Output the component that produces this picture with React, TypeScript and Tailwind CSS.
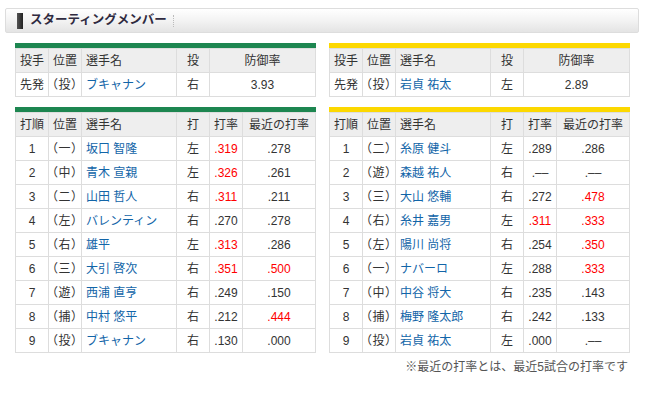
import React from "react";

type Bat = { o: string; p: string; n: string; h: string; a: string; ar?: boolean; r: string; rr?: boolean };

const giants: Bat[] = [
  { o: "1", p: "（一）", n: "坂口 智隆", h: "左", a: ".319", ar: true, r: ".278" },
  { o: "2", p: "（中）", n: "青木 宣親", h: "左", a: ".326", ar: true, r: ".261" },
  { o: "3", p: "（二）", n: "山田 哲人", h: "右", a: ".311", ar: true, r: ".211" },
  { o: "4", p: "（左）", n: "バレンティン", h: "右", a: ".270", r: ".278" },
  { o: "5", p: "（右）", n: "雄平", h: "左", a: ".313", ar: true, r: ".286" },
  { o: "6", p: "（三）", n: "大引 啓次", h: "右", a: ".351", ar: true, r: ".500", rr: true },
  { o: "7", p: "（遊）", n: "西浦 直亨", h: "右", a: ".249", r: ".150" },
  { o: "8", p: "（捕）", n: "中村 悠平", h: "右", a: ".212", r: ".444", rr: true },
  { o: "9", p: "（投）", n: "ブキャナン", h: "右", a: ".130", r: ".000" },
];

const tigers: Bat[] = [
  { o: "1", p: "（二）", n: "糸原 健斗", h: "左", a: ".289", r: ".286" },
  { o: "2", p: "（遊）", n: "森越 祐人", h: "右", a: ".––", r: ".––" },
  { o: "3", p: "（三）", n: "大山 悠輔", h: "右", a: ".272", r: ".478", rr: true },
  { o: "4", p: "（右）", n: "糸井 嘉男", h: "左", a: ".311", ar: true, r: ".333", rr: true },
  { o: "5", p: "（左）", n: "陽川 尚将", h: "右", a: ".254", r: ".350", rr: true },
  { o: "6", p: "（一）", n: "ナバーロ", h: "左", a: ".288", r: ".333", rr: true },
  { o: "7", p: "（中）", n: "中谷 将大", h: "右", a: ".235", r: ".143" },
  { o: "8", p: "（捕）", n: "梅野 隆太郎", h: "右", a: ".242", r: ".133" },
  { o: "9", p: "（投）", n: "岩貞 祐太", h: "左", a: ".000", r: ".––" },
];

const th = "border border-[#dddddd] bg-[#eeeeee] h-[24px] p-0 font-normal text-center";
const td = "border border-[#dddddd] bg-white h-[24px] p-0 text-center";
const pos = "[font-feature-settings:'palt'] tracking-[1px] whitespace-nowrap";

function Cols({ bat }: { bat: boolean }) {
  return bat ? (
    <colgroup>
      <col className="w-[33px]" />
      <col className="w-[33px]" />
      <col className="w-[95px]" />
      <col className="w-[33px]" />
      <col className="w-[33px]" />
      <col />
    </colgroup>
  ) : (
    <colgroup>
      <col className="w-[33px]" />
      <col className="w-[33px]" />
      <col className="w-[95px]" />
      <col className="w-[33px]" />
      <col />
    </colgroup>
  );
}

function Team({
  color,
  pitcher,
  hand,
  era,
  lineup,
}: {
  color: string;
  pitcher: string;
  hand: string;
  era: string;
  lineup: Bat[];
}) {
  return (
    <div className="w-[301px] flex flex-col">
      <div className={`h-[5px] ${color}`} />
      <table className="w-full table-fixed border-collapse">
        <Cols bat={false} />
        <thead>
          <tr>
            <th className={th}>投手</th>
            <th className={th}>位置</th>
            <th className={`${th} !text-left pl-[4px]`}>選手名</th>
            <th className={th}>投</th>
            <th className={th}>防御率</th>
          </tr>
        </thead>
        <tbody>
          <tr>
            <td className={td}>先発</td>
            <td className={`${td} ${pos}`}>（投）</td>
            <td className={`${td} !text-left pl-[4px] text-[#1265a8]`}>{pitcher}</td>
            <td className={td}>{hand}</td>
            <td className={td}>{era}</td>
          </tr>
        </tbody>
      </table>
      <div className={`h-[5px] mt-[10px] ${color}`} />
      <table className="w-full table-fixed border-collapse">
        <Cols bat={true} />
        <thead>
          <tr>
            <th className={th}>打順</th>
            <th className={th}>位置</th>
            <th className={`${th} !text-left pl-[4px]`}>選手名</th>
            <th className={th}>打</th>
            <th className={th}>打率</th>
            <th className={`${th} whitespace-nowrap`}>最近の打率</th>
          </tr>
        </thead>
        <tbody>
          {lineup.map((b) => (
            <tr key={b.o}>
              <td className={td}>{b.o}</td>
              <td className={`${td} ${pos}`}>{b.p}</td>
              <td className={`${td} !text-left pl-[4px] text-[#1265a8] whitespace-nowrap`}>{b.n}</td>
              <td className={td}>{b.h}</td>
              <td className={`${td} ${b.ar ? "text-[#ff0000]" : ""}`}>{b.a}</td>
              <td className={`${td} ${b.rr ? "text-[#ff0000]" : ""}`}>{b.r}</td>
            </tr>
          ))}
        </tbody>
      </table>
    </div>
  );
}

export default function App() {
  return (
    <div className="w-[646px] h-[394px] bg-white text-[#333333] text-[12px] leading-none font-['Liberation_Sans','Noto_Sans_CJK_JP',sans-serif] overflow-hidden">
      <div className="pt-[8px] pl-[5px]">
        <div className="w-[634px] h-[25px] border border-[#dddddd] rounded-[2px] bg-gradient-to-b from-[#ffffff] via-[#f3f3f3] to-[#e4e4e4] flex items-center">
          <div className="ml-[11px] w-[6px] h-[16px] bg-gradient-to-r from-[#555555] to-[#222222]" />
          <div className="ml-[7px] text-[12.5px] font-bold text-[#2f2a40]">スターティングメンバー</div>
          <div className="ml-[6px] h-[12px] border-l border-dotted border-[#bbbbbb]" />
        </div>
      </div>
      <div className="flex gap-[13px] pl-[15px] mt-[10px]">
        <Team color="bg-[#1d8650]" pitcher="ブキャナン" hand="右" era="3.93" lineup={giants} />
        <Team color="bg-[#fcd800]" pitcher="岩貞 祐太" hand="左" era="2.89" lineup={tigers} />
      </div>
      <div className="w-[628px] text-right mt-[8px] text-[#555555]">※最近の打率とは、最近5試合の打率です</div>
    </div>
  );
}
